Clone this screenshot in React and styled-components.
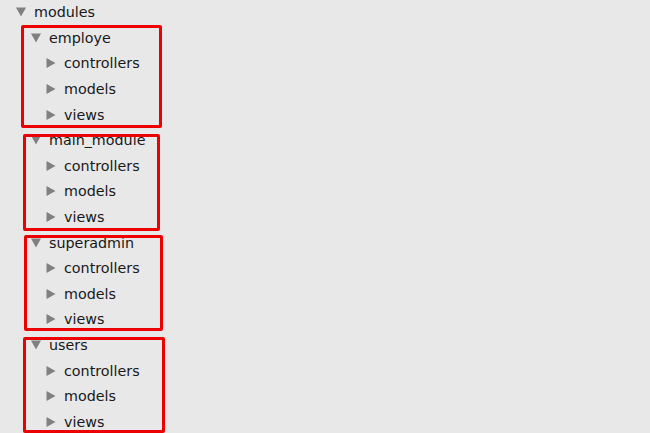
import React from "react";
import styled, { createGlobalStyle } from "styled-components";

const Global = createGlobalStyle`
  html, body { margin: 0; padding: 0; background: #e8e8e8; }
  body { font-family: "DejaVu Sans", "Liberation Sans", sans-serif; }
`;

const Page = styled.div`
  width: 650px;
  height: 433px;
  overflow: hidden;
  background: #e8e8e8;
`;

const Tree = styled.div`
  margin-top: -0.5px;
`;

const Row = styled.div`
  display: flex;
  align-items: center;
  height: 25.6px;
  padding-left: ${(p) => 16 + p.$level * 15}px;
  color: #181818;
  font-size: 14.3px;
  white-space: nowrap;
`;

const Arrow = styled.svg`
  width: 10px;
  height: 10px;
  flex: none;
  margin-right: 8px;
`;

const Group = styled.div`
  position: relative;
`;

const Mark = styled.div`
  position: absolute;
  left: ${(p) => p.$l}px;
  top: ${(p) => p.$t}px;
  width: ${(p) => p.$w}px;
  height: ${(p) => p.$h}px;
  border: 3px solid #ec0000;
  border-radius: 2px;
  box-sizing: border-box;
  pointer-events: none;
`;

function Node({ level, open, label }) {
  return (
    <Row $level={level}>
      <Arrow viewBox="0 0 10 10">
        {open ? (
          <polygon points="0,0.5 10,0.5 5,9.5" fill="#808080" />
        ) : (
          <polygon points="0.5,0 9.5,5 0.5,10" fill="#808080" />
        )}
      </Arrow>
      <span>{label}</span>
    </Row>
  );
}

const groups = [
  { name: "employe", box: { l: 21, t: -0.6, w: 141, h: 103 } },
  { name: "main_module", box: { l: 23, t: 6.5, w: 137, h: 97.5 } },
  { name: "superadmin", box: { l: 23.5, t: 5, w: 139.5, h: 96 } },
  { name: "users", box: { l: 23, t: 4.7, w: 142, h: 96 } },
];

export default function App() {
  return (
    <>
      <Global />
      <Page>
        <Tree>
          <Node level={0} open label="modules" />
          {groups.map((g) => (
            <Group key={g.name}>
              <Node level={1} open label={g.name} />
              <Node level={2} label="controllers" />
              <Node level={2} label="models" />
              <Node level={2} label="views" />
              <Mark $l={g.box.l} $t={g.box.t} $w={g.box.w} $h={g.box.h} />
            </Group>
          ))}
        </Tree>
      </Page>
    </>
  );
}
